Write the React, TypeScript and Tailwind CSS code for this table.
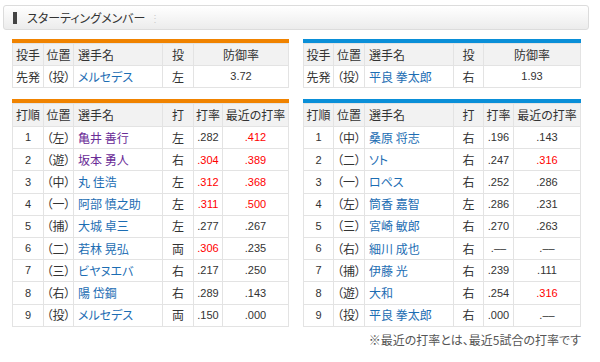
import React from 'react';

type Batter = { order: number; pos: string; name: string; hand: string; avg: string; recent: string; avgRed?: boolean; recentRed?: boolean; visited?: boolean };

const giantsPitcher = { name: 'メルセデス', hand: '左', era: '3.72' };
const carpPitcher = { name: '平良 拳太郎', hand: '右', era: '1.93' };

const giants: Batter[] = [
  { order: 1, pos: '左', name: '亀井 善行', hand: '左', avg: '.282', recent: '.412', recentRed: true, visited: true },
  { order: 2, pos: '遊', name: '坂本 勇人', hand: '右', avg: '.304', recent: '.389', avgRed: true, recentRed: true, visited: true },
  { order: 3, pos: '中', name: '丸 佳浩', hand: '左', avg: '.312', recent: '.368', avgRed: true, recentRed: true },
  { order: 4, pos: '一', name: '阿部 慎之助', hand: '左', avg: '.311', recent: '.500', avgRed: true, recentRed: true },
  { order: 5, pos: '捕', name: '大城 卓三', hand: '左', avg: '.277', recent: '.267' },
  { order: 6, pos: '二', name: '若林 晃弘', hand: '両', avg: '.306', recent: '.235', avgRed: true },
  { order: 7, pos: '三', name: 'ビヤヌエバ', hand: '右', avg: '.217', recent: '.250' },
  { order: 8, pos: '右', name: '陽 岱鋼', hand: '右', avg: '.289', recent: '.143' },
  { order: 9, pos: '投', name: 'メルセデス', hand: '両', avg: '.150', recent: '.000' },
];

const baystars: Batter[] = [
  { order: 1, pos: '中', name: '桑原 将志', hand: '右', avg: '.196', recent: '.143' },
  { order: 2, pos: '二', name: 'ソト', hand: '右', avg: '.247', recent: '.316', recentRed: true },
  { order: 3, pos: '一', name: 'ロペス', hand: '右', avg: '.252', recent: '.286' },
  { order: 4, pos: '左', name: '筒香 嘉智', hand: '左', avg: '.286', recent: '.231' },
  { order: 5, pos: '三', name: '宮崎 敏郎', hand: '右', avg: '.270', recent: '.263' },
  { order: 6, pos: '右', name: '細川 成也', hand: '右', avg: '.––', recent: '.––' },
  { order: 7, pos: '捕', name: '伊藤 光', hand: '右', avg: '.239', recent: '.111' },
  { order: 8, pos: '遊', name: '大和', hand: '右', avg: '.254', recent: '.316', recentRed: true },
  { order: 9, pos: '投', name: '平良 拳太郎', hand: '右', avg: '.000', recent: '.––' },
];

const cell = 'border border-[#e3e3e3] p-0 font-normal';
const th = `${cell} bg-[#f2f2f2] text-[#333]`;
const num = "font-['Liberation_Sans'] text-[11px]";

const PitcherTable = ({ color, p, widths }: { color: string; p: { name: string; hand: string; era: string }; widths: number[] }) => (
  <div>
    <div className={`h-[4px] ${color}`} />
    <table className="w-full border-collapse table-fixed text-[12px] text-[#333]">
      <colgroup>
        {widths.map((w, i) => (
          <col key={i} style={{ width: w }} />
        ))}
        <col />
      </colgroup>
      <thead>
        <tr className="h-[22px]">
          <th className={`${th} text-center`}>投手</th>
          <th className={`${th} text-center`}>位置</th>
          <th className={`${th} text-left pl-[4px]`}>選手名</th>
          <th className={`${th} text-center`}>投</th>
          <th className={`${th} text-center`}>防御率</th>
        </tr>
      </thead>
      <tbody>
        <tr className="bg-white h-[22px]">
          <td className={`${cell} text-center`}>先発</td>
          <td className={`${cell} text-center`}>（投）</td>
          <td className={`${cell} pl-[4px] text-[#1c6db3]`}>{p.name}</td>
          <td className={`${cell} text-center`}>{p.hand}</td>
          <td className={`${cell} text-center ${num}`}>{p.era}</td>
        </tr>
      </tbody>
    </table>
  </div>
);

const BatterTable = ({ color, rows, widths }: { color: string; rows: Batter[]; widths: number[] }) => (
  <div>
    <div className={`h-[4px] ${color}`} />
    <table className="w-full border-collapse table-fixed text-[12px] text-[#333]">
      <colgroup>
        {widths.map((w, i) => (
          <col key={i} style={{ width: w }} />
        ))}
        <col />
      </colgroup>
      <thead>
        <tr className="h-[23px]">
          <th className={`${th} text-center`}>打順</th>
          <th className={`${th} text-center`}>位置</th>
          <th className={`${th} text-left pl-[4px]`}>選手名</th>
          <th className={`${th} text-center`}>打</th>
          <th className={`${th} text-center`}>打率</th>
          <th className={`${th} text-center`}>最近の打率</th>
        </tr>
      </thead>
      <tbody>
        {rows.map(r => (
          <tr key={r.order} className="bg-white h-[22.2px]">
            <td className={`${cell} text-center ${num}`}>{r.order}</td>
            <td className={`${cell} text-center`}>（{r.pos}）</td>
            <td className={`${cell} pl-[4px] whitespace-nowrap ${r.visited ? 'text-[#6a2c97]' : 'text-[#1c6db3]'}`}>{r.name}</td>
            <td className={`${cell} text-center`}>{r.hand}</td>
            <td className={`${cell} text-center ${num} ${r.avgRed ? 'text-[#ff0000]' : ''}`}>{r.avg}</td>
            <td className={`${cell} text-center ${num} ${r.recentRed ? 'text-[#ff0000]' : ''}`}>{r.recent}</td>
          </tr>
        ))}
      </tbody>
    </table>
  </div>
);

export default function App() {
  return (
    <div className="w-[600px] h-[362px] bg-white font-['Noto_Sans_CJK_JP',sans-serif] [font-feature-settings:'palt'] pt-[5px] pl-[3px] pr-[11px]">
      <div className="h-[25px] rounded-[3px] border border-[#dcdcdc] bg-gradient-to-b from-white to-[#ececec] flex items-center pl-[9px]">
        <div className="w-[4px] h-[12px] bg-[#444] mr-[10px]" />
        <span className="text-[12px] text-[#333] leading-none">スターティングメンバー</span>
        <span className="ml-[5px] text-[10px] text-[#ccc] leading-none">⋮</span>
      </div>
      <div className="grid grid-cols-[277px_278px] gap-x-[14px] pl-[9px] mt-[9px]">
        <PitcherTable color="bg-[#f08300]" p={giantsPitcher} widths={[31, 30, 89, 31]} />
        <PitcherTable color="bg-[#0a8fd8]" p={carpPitcher} widths={[30, 31, 89, 30]} />
      </div>
      <div className="grid grid-cols-[277px_278px] gap-x-[14px] pl-[9px] mt-[11px]">
        <BatterTable color="bg-[#f08300]" rows={giants} widths={[31, 30, 89, 31, 29]} />
        <BatterTable color="bg-[#0a8fd8]" rows={baystars} widths={[30, 31, 89, 30, 30]} />
      </div>
      <div className="text-right text-[12px] text-[#555] mt-[4px] pr-[8px]">※最近の打率とは、最近5試合の打率です</div>
    </div>
  );
}
